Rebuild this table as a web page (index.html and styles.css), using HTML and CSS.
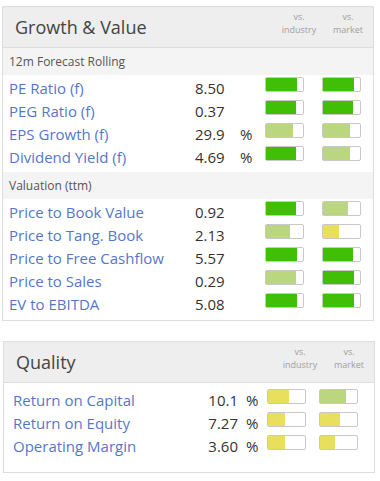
FILE: index.html
```html
<!DOCTYPE html>
<html>
<head>
<meta charset="utf-8">
<link rel="stylesheet" href="styles.css">
</head>
<body>
<section class="card card-growth">
  <header class="card-head">
    <h2 class="title">Growth &amp; Value</h2>
    <div class="vs vs-ind">vs.<br>industry</div>
    <div class="vs vs-mkt">vs.<br>market</div>
  </header>
  <div class="sub">12m Forecast Rolling</div>
  <div class="rows">
    <div class="row"><a class="lbl">PE Ratio (f)</a><span class="val">8.50</span><span class="unit"></span><span class="bar"><i class="f dark" style="width:31px"></i></span><span class="bar"><i class="f dark" style="width:31px"></i></span></div>
    <div class="row"><a class="lbl">PEG Ratio (f)</a><span class="val">0.37</span><span class="unit"></span><span class="bar"><i class="f dark" style="width:30px"></i></span><span class="bar"><i class="f dark" style="width:30px"></i></span></div>
    <div class="row"><a class="lbl">EPS Growth (f)</a><span class="val">29.9</span><span class="unit">%</span><span class="bar"><i class="f light" style="width:27px"></i></span><span class="bar"><i class="f light" style="width:27px"></i></span></div>
    <div class="row"><a class="lbl">Dividend Yield (f)</a><span class="val">4.69</span><span class="unit">%</span><span class="bar"><i class="f dark" style="width:30px"></i></span><span class="bar"><i class="f light" style="width:27px"></i></span></div>
  </div>
  <div class="sub">Valuation (ttm)</div>
  <div class="rows rows-last">
    <div class="row"><a class="lbl">Price to Book Value</a><span class="val">0.92</span><span class="unit"></span><span class="bar"><i class="f dark" style="width:30px"></i></span><span class="bar"><i class="f light" style="width:25px"></i></span></div>
    <div class="row"><a class="lbl">Price to Tang. Book</a><span class="val">2.13</span><span class="unit"></span><span class="bar"><i class="f light" style="width:24px"></i></span><span class="bar"><i class="f yellow" style="width:16px"></i></span></div>
    <div class="row"><a class="lbl">Price to Free Cashflow</a><span class="val">5.57</span><span class="unit"></span><span class="bar"><i class="f dark" style="width:31px"></i></span><span class="bar"><i class="f dark" style="width:30px"></i></span></div>
    <div class="row"><a class="lbl">Price to Sales</a><span class="val">0.29</span><span class="unit"></span><span class="bar"><i class="f light" style="width:30px"></i></span><span class="bar"><i class="f dark" style="width:31px"></i></span></div>
    <div class="row"><a class="lbl">EV to EBITDA</a><span class="val">5.08</span><span class="unit"></span><span class="bar"><i class="f dark" style="width:31px"></i></span><span class="bar"><i class="f dark" style="width:31px"></i></span></div>
  </div>
</section>

<section class="card card-quality">
  <header class="card-head">
    <h2 class="title">Quality</h2>
    <div class="vs vs-ind">vs.<br>industry</div>
    <div class="vs vs-mkt">vs.<br>market</div>
  </header>
  <div class="qrows">
    <div class="qrow"><a class="lbl">Return on Capital</a><span class="val">10.1</span><span class="unit">%</span><span class="bar"><i class="f yellow" style="width:21px"></i></span><span class="bar"><i class="f light" style="width:26px"></i></span></div>
    <div class="qrow"><a class="lbl">Return on Equity</a><span class="val">7.27</span><span class="unit">%</span><span class="bar"><i class="f yellow" style="width:17px"></i></span><span class="bar"><i class="f yellow" style="width:20px"></i></span></div>
    <div class="qrow"><a class="lbl">Operating Margin</a><span class="val">3.60</span><span class="unit">%</span><span class="bar"><i class="f yellow" style="width:17px"></i></span><span class="bar"><i class="f yellow" style="width:15px"></i></span></div>
  </div>
</section>
</body>
</html>
```

FILE: styles.css
```css
* { box-sizing: border-box; }
html, body { margin: 0; padding: 0; background: #fff; }
body {
  padding-top: 6px;
  font-family: "Open Sans", "Liberation Sans", sans-serif;
  color: #333;
}
.card {
  width: 372px;
  border: 1px solid #dddddd;
  background: #fff;
}
.card-growth { margin-left: 2px; }
.card-quality { margin-left: 3px; margin-top: 20px; }

.card-head {
  display: flex;
  align-items: flex-start;
  height: 41px;
  background: #eeeeee;
  border-bottom: 1px solid #dddddd;
  padding-right: 5px;
}
.title {
  flex: 1;
  margin: 0;
  padding-left: 12px;
  font-size: 18px;
  font-weight: 400;
  line-height: 40px;
  color: #444;
}
.vs {
  margin-top: 3px;
  font-size: 9px;
  line-height: 13px;
  color: #a0a0a0;
  text-align: center;
}
.vs-ind { width: 46px; }
.vs-mkt { width: 40px; margin-left: 6px; }

.sub {
  height: 27px;
  line-height: 27px;
  background: #f4f4f4;
  padding-left: 6px;
  font-size: 12px;
  color: #555;
}
.rows { padding: 2px 0 3px; }
.rows-last { padding-bottom: 4px; }
.row {
  display: grid;
  grid-template-columns: 186px 45px 25px 57px 39px;
  padding-left: 6px;
  height: 23px;
  line-height: 23px;
  font-size: 15px;
}
.lbl { color: #5677c9; white-space: nowrap; }
.val { color: #333; }
.unit { color: #333; }
.bar {
  display: block;
  width: 39px;
  height: 15px;
  border: 1px solid #c8c8c8;
  border-radius: 2px;
  background: #fff;
  align-self: start;
}
.f { display: block; height: 13px; }
.dark { background: #41be06; }
.light { background: #bad67f; }
.yellow { background: #e8e05c; }

.qrows { padding: 6px 0 14px; }
.qrow {
  display: grid;
  grid-template-columns: 185px 40px 29px 52px 39px;
  padding-left: 9px;
  height: 23px;
  line-height: 23px;
  font-size: 15px;
}
.qrow .val { text-align: right; }
.qrow .unit { padding-left: 8px; }
```
